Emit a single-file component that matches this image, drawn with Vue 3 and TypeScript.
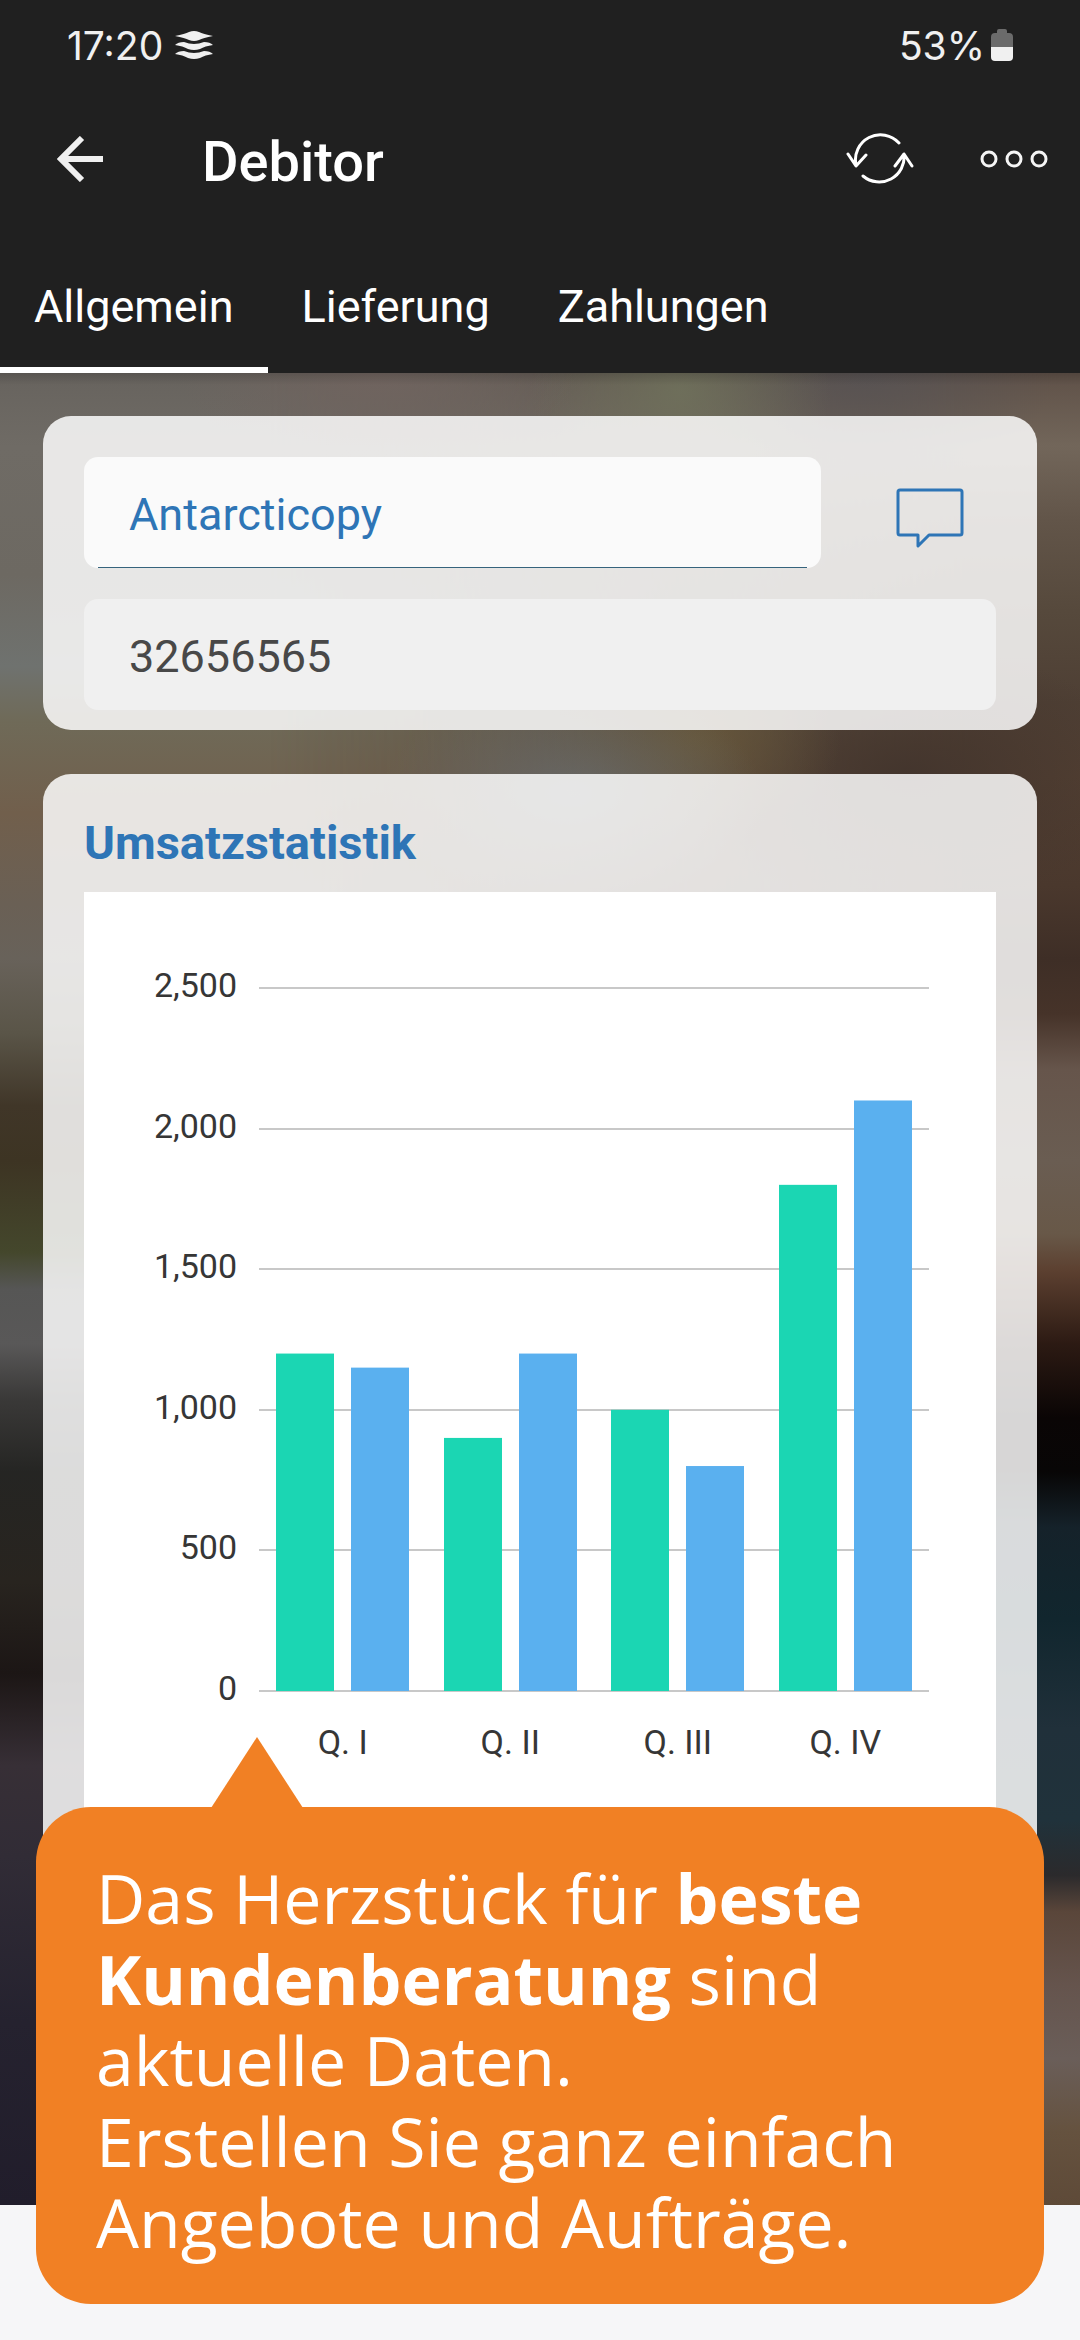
<script setup lang="ts">
import { computed, ref } from 'vue'

interface Quarter {
  label: string
  previous: number
  current: number
}

const tabs = ['Allgemein', 'Lieferung', 'Zahlungen']
const activeTab = ref('Allgemein')
const customerName = ref('Antarcticopy')
const customerNumber = ref('32656565')

const quarters: Quarter[] = [
  { label: 'Q. I', previous: 1200, current: 1150 },
  { label: 'Q. II', previous: 900, current: 1200 },
  { label: 'Q. III', previous: 1000, current: 800 },
  { label: 'Q. IV', previous: 1800, current: 2100 },
]

const plot = { left: 175, right: 845, top: 96, bottom: 799, max: 2500 }
const barWidth = 58
const barGap = 17

const yOf = (value: number): number =>
  plot.bottom - (value / plot.max) * (plot.bottom - plot.top)

const ticks = [2500, 2000, 1500, 1000, 500, 0].map((value) => ({
  label: value.toLocaleString('en-US'),
  y: Math.round(yOf(value)),
}))

const groups = computed(() => {
  const slot = (plot.right - plot.left) / quarters.length
  return quarters.map((q, i) => {
    const start = plot.left + slot * i
    return {
      label: q.label,
      center: start + slot / 2,
      bars: [
        { kind: 'previous', x: Math.round(start + barGap), y: yOf(q.previous) },
        { kind: 'current', x: Math.round(start + barGap * 2 + barWidth), y: yOf(q.current) },
      ],
    }
  })
})
</script>

<template>
  <div class="page">
    <header class="app-header">
      <div class="status">
        <div class="status-group">
          <span>17:20</span>
          <svg class="layers" width="38" height="28" viewBox="0 0 38 28" aria-hidden="true">
            <path d="M0 5 Q10 3 14 1 Q19 -1 24 1 Q28 3 38 5 Q28 7 24 9 Q19 11 14 9 Q10 7 0 5Z" />
            <path d="M0 14 Q3 11 9 11 Q19 15 29 11 Q35 11 38 14 Q30 15 25 18 Q19 20 13 18 Q8 15 0 14Z" />
            <path d="M0 23 Q3 20 9 20 Q19 24 29 20 Q35 20 38 23 Q30 24 25 27 Q19 29 13 27 Q8 24 0 23Z" />
          </svg>
        </div>
        <div class="status-group battery-group">
          <span>53%</span>
          <svg width="22" height="32" viewBox="0 0 22 32" aria-hidden="true">
            <path fill="#6b6b6b" d="M6 4V2Q6 0 8 0H14Q16 0 16 2V4H18Q22 4 22 8V19H0V8Q0 4 4 4Z" />
            <path fill="#f0f0f0" d="M0 18H22V28Q22 32 18 32H4Q0 32 0 28Z" />
          </svg>
        </div>
      </div>

      <div class="toolbar">
        <button class="icon-button back" type="button" aria-label="Zurück">
          <svg width="46" height="46" viewBox="0 0 46 46" fill="none" stroke="#f0f0f0" stroke-width="6">
            <path d="M46 23H5M25 2L4 23L25 44" />
          </svg>
        </button>
        <h1>Debitor</h1>
        <button class="icon-button" type="button" aria-label="Aktualisieren">
          <svg width="68" height="54" viewBox="0 0 68 54" fill="none" stroke="#fff" stroke-width="3" stroke-linecap="round" stroke-linejoin="round">
            <path d="M53 11A25 25 0 0 0 10 33M2 22L10 34L20 23" />
            <path d="M17 44A25 25 0 0 0 58 22M49 34L58 22L66 34" />
          </svg>
        </button>
        <button class="icon-button" type="button" aria-label="Mehr">
          <svg width="68" height="20" viewBox="0 0 68 20" fill="none" stroke="#f5f5f5" stroke-width="3">
            <circle cx="9" cy="10" r="7" />
            <circle cx="34" cy="10" r="7" />
            <circle cx="59" cy="10" r="7" />
          </svg>
        </button>
      </div>

      <nav class="tabs" role="tablist">
        <button
          v-for="tab in tabs"
          :key="tab"
          type="button"
          role="tab"
          class="tab"
          :class="{ active: tab === activeTab }"
          :aria-selected="tab === activeTab"
          @click="activeTab = tab"
        >
          {{ tab }}
        </button>
      </nav>
    </header>

    <main class="scene">
      <section class="card identity">
        <div class="name-row">
          <input v-model="customerName" class="field name" type="text" aria-label="Name" />
          <button class="comment" type="button" aria-label="Kommentar">
            <svg width="68" height="70" viewBox="0 0 68 70" fill="none" stroke="#2e75b6" stroke-width="3" stroke-linejoin="round">
              <path d="M4 12H64Q66 12 66 14V55Q66 57 64 57H33L22 68V57H4Q2 57 2 55V14Q2 12 4 12Z" />
            </svg>
          </button>
        </div>
        <input v-model="customerNumber" class="field number" type="text" aria-label="Debitorennummer" readonly />
      </section>

      <section class="card stats">
        <h2>Umsatzstatistik</h2>
        <div class="chart">
          <svg viewBox="0 0 912 1000" role="img" aria-label="Umsatzstatistik nach Quartal">
            <g v-for="tick in ticks" :key="tick.label">
              <rect class="grid" :x="plot.left" :y="tick.y - 1" :width="plot.right - plot.left" height="2" />
              <text class="label" x="153" :y="tick.y + 9" text-anchor="end">{{ tick.label }}</text>
            </g>
            <g v-for="group in groups" :key="group.label">
              <rect
                v-for="bar in group.bars"
                :key="bar.kind"
                :class="bar.kind"
                :x="bar.x"
                :y="bar.y"
                :width="barWidth"
                :height="plot.bottom - bar.y"
              />
              <text class="label" :x="group.center" y="862" text-anchor="middle">{{ group.label }}</text>
            </g>
          </svg>
        </div>
      </section>
    </main>

    <footer class="bottom-bar"></footer>

    <aside class="callout">
      <svg class="pointer" width="92" height="71" viewBox="0 0 92 71" aria-hidden="true">
        <path d="M46 0L92 71H0Z" fill="#f18024" />
      </svg>
      <p>
        Das Herzstück für <strong>beste Kundenberatung</strong> sind<br />
        aktuelle Daten.<br />
        Erstellen Sie ganz einfach<br />
        Angebote und Aufträge.
      </p>
    </aside>
  </div>
</template>

<style>
body {
  margin: 0;
}
</style>

<style scoped>
.page {
  position: relative;
  display: flex;
  flex-direction: column;
  min-height: 100vh;
  background: #f6f6f8;
  font-family: Roboto, "Liberation Sans", sans-serif;
}

button,
input {
  margin: 0;
  padding: 0;
  border: 0;
  background: none;
  font: inherit;
  color: inherit;
}

svg {
  display: block;
}

.app-header {
  background: #202020;
  color: #fff;
}

.status {
  display: flex;
  align-items: center;
  justify-content: space-between;
  height: 90px;
  padding: 0 67px;
  color: #f0f0f0;
  font-family: Inter, Roboto, sans-serif;
  font-size: 39px;
}

.status-group {
  display: flex;
  align-items: center;
  gap: 12px;
}

.battery-group {
  gap: 6px;
}

.layers {
  fill: #f0f0f0;
}

.toolbar {
  display: flex;
  align-items: center;
  height: 138px;
  padding: 0 18px 0 40px;
}

.icon-button {
  display: flex;
  align-items: center;
  justify-content: center;
  width: 96px;
  height: 96px;
}

.icon-button + .icon-button {
  margin-left: 38px;
}

.back {
  width: 80px;
}

h1 {
  flex: 1;
  margin: 0 0 0 82px;
  padding-top: 5px;
  font-size: 56px;
  line-height: 64px;
  font-weight: 500;
}

.tabs {
  display: flex;
}

.tab {
  padding: 53px 34px 34px;
  border-bottom: 6px solid transparent;
  font-size: 45px;
  line-height: 52px;
}

.tab.active {
  border-bottom-color: #fff;
}

.scene {
  position: relative;
  z-index: 0;
  flex: 1;
  display: flex;
  flex-direction: column;
  gap: 44px;
  padding: 43px 43px 44px;
  background:
    linear-gradient(#67635e 0%, #6f6b65 4%, #6d6962 11%, #6f726f 16%, #6f6a58 19%, #715f4c 24%, #6a6055 29%, #68625a 32%, #5a5548 36%, #403628 40%, #3d3423 43%, #44472c 48%, #565655 50%, #595858 53%, #3a3938 56%, #252523 60%, #28241f 66%, #1c1615 71%, #372f36 76%, #312c36 81%, #25222f 90%, #211d2b 100%);
}

.scene::before {
  content: "";
  position: absolute;
  inset: 0;
  z-index: -1;
  background:
    linear-gradient(#5f5148 0%, #72665a 4%, #625549 8%, #56493c 13%, #4e3f34 18%, #523f32 22%, #4a382d 28%, #3e2e26 32%, #463329 35%, #66554b 38%, #6a5d52 43%, #685848 47%, #5c4030 49%, #2c1a13 53%, #0a0505 57%, #080606 60%, #15222a 63%, #11262e 68%, #20303a 74%, #20323b 79%, #2b2a2c 82%, #5a463a 84%, #65544d 88%, #6a5e59 92%, #65523f 96%, #5e4a38 100%);
  mask-image: linear-gradient(90deg, transparent 25%, #000 90%);
}

.scene::after {
  content: "";
  position: absolute;
  inset: 0;
  z-index: -1;
  background:
    linear-gradient(rgba(0, 0, 0, 0.15), transparent 12px),
    radial-gradient(150px 130px at 63% 1%, rgba(112, 115, 92, 0.8), transparent),
    radial-gradient(190px 110px at 80% 0%, #585353, transparent),
    radial-gradient(200px 100px at 35% 0%, #70645f, transparent),
    radial-gradient(190px 110px at 53% 23%, rgba(104, 109, 111, 0.8), transparent),
    radial-gradient(150px 100px at 64% 20%, #66563a, transparent),
    radial-gradient(240px 130px at 84% 22%, #43352d, transparent);
}

.card {
  border-radius: 28px;
  background: rgba(255, 255, 255, 0.84);
}

.identity {
  display: flex;
  flex-direction: column;
  gap: 31px;
  padding: 41px 41px 20px;
}

.name-row {
  display: flex;
  gap: 43px;
}

.field {
  box-sizing: border-box;
  min-width: 0;
  height: 111px;
  padding: 4px 45px 0;
  border-radius: 14px;
  font-size: 45px;
  outline: none;
}

.name {
  flex: 1;
  background: linear-gradient(#35637c, #35637c) 50% 100% / calc(100% - 28px) 1px no-repeat #fafafa;
  color: #2e75b6;
}

.number {
  background: #f0f0f0;
  color: #484848;
}

.comment {
  display: flex;
  align-items: center;
  justify-content: center;
  width: 132px;
}

.stats {
  flex: 1;
  padding: 41px 41px 0;
}

h2 {
  margin: 0 0 21px;
  color: #2e75b6;
  font-size: 47px;
  line-height: 56px;
  font-weight: 700;
}

.chart {
  background: #fff;
}

.chart svg {
  width: 100%;
}

.grid {
  fill: #c8c8c8;
}

.label {
  fill: #363636;
  font-size: 34px;
}

.previous {
  fill: #1bd6b3;
}

.current {
  fill: #5ab0ef;
}

.bottom-bar {
  height: 135px;
}

.callout {
  position: absolute;
  right: 36px;
  bottom: 36px;
  left: 36px;
  padding: 50px 60px 42px;
  border-radius: 55px;
  background: #f18024;
  color: #fff;
  font-family: "Open Sans", sans-serif;
  font-size: 68px;
  line-height: 81px;
}

.callout p {
  margin: 0;
}

.pointer {
  position: absolute;
  bottom: 100%;
  left: 175px;
  margin-bottom: -1px;
}
</style>
